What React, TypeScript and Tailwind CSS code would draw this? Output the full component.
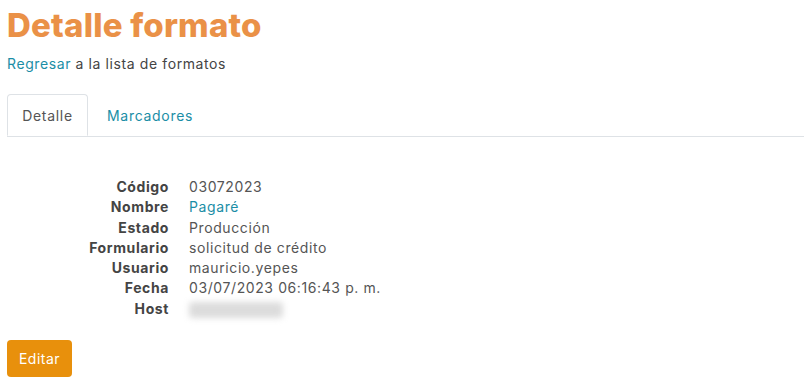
import React from "react";

const rows: { label: string; value: React.ReactNode }[] = [
  { label: "Código", value: "03072023" },
  { label: "Nombre", value: <a className="text-[#1b8ea6]">Pagaré</a> },
  { label: "Estado", value: "Producción" },
  { label: "Formulario", value: "solicitud de crédito" },
  { label: "Usuario", value: "mauricio.yepes" },
  { label: "Fecha", value: "03/07/2023 06:16:43 p. m." },
  {
    label: "Host",
    value: (
      <span className="inline-block align-middle w-[94px] h-[16px] bg-[#dcdcdc] blur-[3px] rounded-sm" />
    ),
  },
];

export default function App() {
  return (
    <div
      className="w-[804px] h-[382px] bg-white overflow-hidden px-[7px] text-[#555]"
      style={{ fontFamily: "Inter, 'Noto Sans', sans-serif" }}
    >
      <h1 className="pt-[6px] text-[33px] leading-[38px] font-extrabold text-[#ea9147] tracking-[0.2px]">
        Detalle formato
      </h1>
      <p className="mt-[10px] text-[14px] leading-[20px] text-[#444] tracking-[0.6px]">
        <a className="text-[#1b8ea6]">Regresar</a> a la lista de formatos
      </p>
      <div className="mt-[20px] flex border-b border-[#dee2e6] -mr-[7px] text-[14px] tracking-[0.7px]">
        <div className="w-[81px] h-[42px] flex items-center justify-center border border-[#dee2e6] border-b-white -mb-px rounded-t-[4px] bg-white text-[#555]">
          Detalle
        </div>
        <div className="h-[42px] flex items-center pl-[19px] text-[#1b8ea6]">Marcadores</div>
      </div>
      <div className="mt-[40px] text-[14px] leading-[20.3px] tracking-[0.6px]">
        {rows.map((r) => (
          <div key={r.label} className="flex">
            <div className="w-[162px] text-right font-bold text-[#444]">{r.label}</div>
            <div className="ml-[20px] text-[#555]">{r.value}</div>
          </div>
        ))}
      </div>
      <button className="mt-[21px] h-[37px] w-[65px] rounded-[4px] bg-[#e8900c] text-white text-[14px] tracking-[0.5px]">
        Editar
      </button>
    </div>
  );
}
